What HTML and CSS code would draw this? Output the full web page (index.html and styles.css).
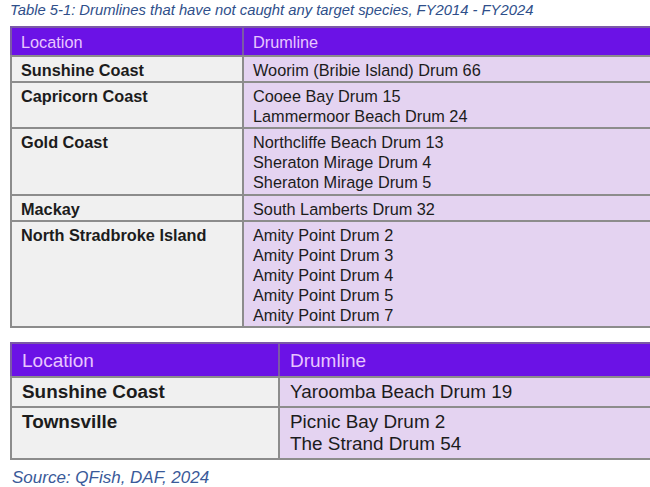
FILE: index.html
```html
<!DOCTYPE html>
<html>
<head>
<meta charset="utf-8">
<link rel="stylesheet" href="styles.css">
</head>
<body>
<div class="page">
  <p class="caption">Table 5-1: Drumlines that have not caught any target species, FY2014 - FY2024</p>
  <table class="tbl tbl-a">
    <thead>
      <tr><th class="c1">Location</th><th class="c2">Drumline</th></tr>
    </thead>
    <tbody>
      <tr><td class="loc">Sunshine Coast</td><td class="drum">Woorim (Bribie Island) Drum 66</td></tr>
      <tr><td class="loc">Capricorn Coast</td><td class="drum">Cooee Bay Drum 15<br>Lammermoor Beach Drum 24</td></tr>
      <tr><td class="loc">Gold Coast</td><td class="drum">Northcliffe Beach Drum 13<br>Sheraton Mirage Drum 4<br>Sheraton Mirage Drum 5</td></tr>
      <tr><td class="loc">Mackay</td><td class="drum">South Lamberts Drum 32</td></tr>
      <tr><td class="loc">North Stradbroke Island</td><td class="drum">Amity Point Drum 2<br>Amity Point Drum 3<br>Amity Point Drum 4<br>Amity Point Drum 5<br>Amity Point Drum 7</td></tr>
    </tbody>
  </table>
  <table class="tbl tbl-b">
    <thead>
      <tr><th class="c1">Location</th><th class="c2">Drumline</th></tr>
    </thead>
    <tbody>
      <tr><td class="loc">Sunshine Coast</td><td class="drum">Yaroomba Beach Drum 19</td></tr>
      <tr><td class="loc">Townsville</td><td class="drum">Picnic Bay Drum 2<br>The Strand Drum 54</td></tr>
    </tbody>
  </table>
  <p class="source">Source: QFish, DAF, 2024</p>
</div>
</body>
</html>
```
FILE: styles.css
```css
html, body {
  margin: 0;
  padding: 0;
  background: #ffffff;
  overflow: hidden;
}
body {
  font-family: "Liberation Sans", Arial, sans-serif;
  color: #1a1a1a;
}
.page {
  width: 650px;
  height: 487px;
  overflow: hidden;
  padding-left: 10px;
  box-sizing: border-box;
}
.caption {
  margin: 0;
  padding-top: 1px;
  font-style: italic;
  font-size: 14.8px;
  line-height: 18px;
  color: #2f4f8a;
  white-space: nowrap;
}
.tbl {
  border-collapse: collapse;
  border: 2px solid #8c8c8c;
  table-layout: fixed;
}
.tbl th {
  background: #6b12e6;
  color: #e8c6ff;
  font-weight: normal;
  text-align: left;
  border: 2px solid #7b5aa6;
  border-bottom: 2px solid #8c8c8c;
}
.tbl td {
  vertical-align: top;
  border: 2px solid #8c8c8c;
  color: #1c1c1c;
}
.tbl td.loc {
  background: #f0f0f0;
  font-weight: bold;
}
.tbl td.drum {
  background: #e4d3f1;
}

.tbl-a {
  margin-top: 7px;
  width: 680px;
  font-size: 16.3px;
  line-height: 20.1px;
}
.tbl-a .c1 { width: 212px; }
.tbl-a th {
  height: 25px;
  padding: 2px 9px 0 9px;
  font-size: 16.3px;
}
.tbl-a td {
  padding: 3px 9px 1px 9px;
}

.tbl-b {
  margin-top: 14px;
  width: 680px;
  font-size: 18.9px;
  line-height: 22px;
}
.tbl-b .c1 { width: 246px; }
.tbl-b th {
  height: 30px;
  padding: 2px 10px 0 10px;
  font-size: 19px;
}
.tbl-b td {
  padding: 3px 10px 3px 10px;
}
.source {
  margin: 10px 0 0 0;
  padding-left: 2px;
  font-style: italic;
  font-size: 17px;
  line-height: 16px;
  color: #3a5a99;
}
```
